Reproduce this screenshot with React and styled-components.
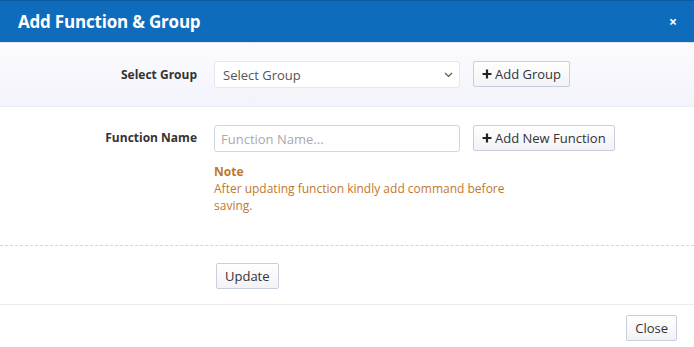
import React from 'react';
import styled, { createGlobalStyle } from 'styled-components';

const GlobalStyle = createGlobalStyle`
  html, body {
    margin: 0;
    padding: 0;
    background: #fff;
  }
  body {
    font-family: 'Open Sans', 'Noto Sans', sans-serif;
  }
`;

const Modal = styled.div`
  width: 694px;
  height: 347px;
  background: #fff;
  display: flex;
  flex-direction: column;
  overflow: hidden;
`;

const Header = styled.div`
  height: 41px;
  background: #0f6cbd;
  border-top: 1px solid #0b5aa2;
  border-bottom: 1px solid #dfe3ee;
  display: flex;
  align-items: center;
  justify-content: space-between;
  padding: 0 17px 0 18px;
`;

const Title = styled.h1`
  margin: 0;
  color: #fff;
  font-size: 17px;
  font-weight: 700;
  letter-spacing: -0.2px;
`;

const CloseX = styled.button`
  border: none;
  background: none;
  color: #fff;
  font-size: 14px;
  font-weight: 700;
  padding: 0;
  cursor: pointer;
  font-family: inherit;
`;

const Section = styled.div`
  padding: ${(p) => p.$pad || '18px 0'};
  background: ${(p) => (p.$tinted ? 'linear-gradient(180deg, #fbfbfe 0%, #f3f3fb 100%)' : '#fff')};
  border-bottom: ${(p) => p.$border || 'none'};
  height: ${(p) => p.$h || 'auto'};
  box-sizing: border-box;
`;

const Row = styled.div`
  display: grid;
  grid-template-columns: 214px 246px max-content;
  align-items: start;
`;

const Label = styled.label`
  font-size: 12px;
  font-weight: 700;
  color: #333;
  text-align: right;
  padding-right: 17px;
  padding-top: ${(p) => p.$top || '4px'};
`;

const SelectBox = styled.div`
  height: 27px;
  box-sizing: border-box;
  border: 1px solid #e6e7ef;
  border-radius: 3px;
  background: #fff;
  display: flex;
  align-items: center;
  justify-content: space-between;
  padding: 0 6px 0 8px;
  font-size: 13px;
  color: #555;
`;

const TextInput = styled.input`
  width: 100%;
  height: 27px;
  box-sizing: border-box;
  border: 1px solid #d3d5dd;
  border-radius: 3px;
  padding: 0 6px;
  font-size: 13px;
  font-family: inherit;
  color: #333;
  &::placeholder {
    color: #a9a9b0;
  }
`;

const Button = styled.button`
  height: 26px;
  box-sizing: border-box;
  border: 1px solid #c9cde0;
  border-radius: 2px;
  background: linear-gradient(180deg, #ffffff 0%, #f2f3f7 100%);
  color: #333;
  font-family: inherit;
  font-size: 13px;
  padding: 0 8px;
  margin-left: ${(p) => p.$ml || '0'};
  display: inline-flex;
  align-items: center;
  gap: 3px;
  cursor: pointer;
`;

const Note = styled.div`
  margin-top: 11px;
  width: 300px;
  color: #c0782e;
  font-size: 12px;
  line-height: 17px;
`;

const NoteTitle = styled.div`
  font-weight: 700;
`;

const Dashed = styled.div`
  border-top: 1px dashed #cfd5de;
`;

const Footer = styled.div`
  flex: 1;
  border-top: 1px solid #e9e9ee;
  display: flex;
  justify-content: flex-end;
  align-items: flex-start;
  padding: 10px 17px 0 0;
`;

const Plus = () => (
  <svg width="10" height="10" viewBox="0 0 10 10">
    <path d="M5 0.5v9M0.5 5h9" stroke="#222" strokeWidth="2.2" />
  </svg>
);

const Chevron = () => (
  <svg width="9" height="6" viewBox="0 0 9 6">
    <path d="M1 1l3.5 3.5L8 1" stroke="#555" strokeWidth="1.2" fill="none" />
  </svg>
);

export default function App() {
  return (
    <Modal>
      <GlobalStyle />
      <Header>
        <Title>Add Function &amp; Group</Title>
        <CloseX>×</CloseX>
      </Header>

      <Section $tinted $h="64px" $border="1px solid #ececf3">
        <Row>
          <Label $top="5px">Select Group</Label>
          <SelectBox>
            <span>Select Group</span>
            <Chevron />
          </SelectBox>
          <Button $ml="13px">
            <Plus /> Add Group
          </Button>
        </Row>
      </Section>

      <Section $h="138px">
        <Row>
          <Label>Function Name</Label>
          <div>
            <TextInput placeholder="Function Name..." />
            <Note>
              <NoteTitle>Note</NoteTitle>
              After updating function kindly add command before saving.
            </Note>
          </div>
          <Button $ml="13px">
            <Plus /> Add New Function
          </Button>
        </Row>
      </Section>

      <Dashed />

      <Section $pad="17px 0 0 216px" $h="58px">
        <Button>Update</Button>
      </Section>

      <Footer>
        <Button>Close</Button>
      </Footer>
    </Modal>
  );
}
